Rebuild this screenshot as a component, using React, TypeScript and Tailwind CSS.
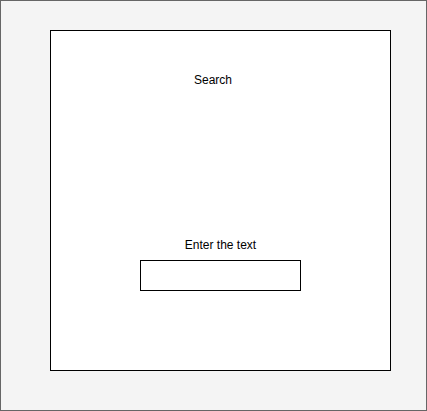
export default function App() {
  return (
    <div className="w-[427px] h-[411px] bg-[#f4f4f4] border border-[#666666] pt-[29px] pl-[49px] font-['Liberation_Sans',Arial,sans-serif] text-[12px] leading-[14px] text-[#000000]">
      <div className="w-[341px] h-[341px] bg-white border border-black flex flex-col">
        <div className="mt-[42px] pl-[143px]">Search</div>
        <div className="mt-[151px] text-center">Enter the text</div>
        <div className="mt-[8px] ml-[89px] w-[161px] h-[31px] border border-black bg-white" />
      </div>
    </div>
  );
}
